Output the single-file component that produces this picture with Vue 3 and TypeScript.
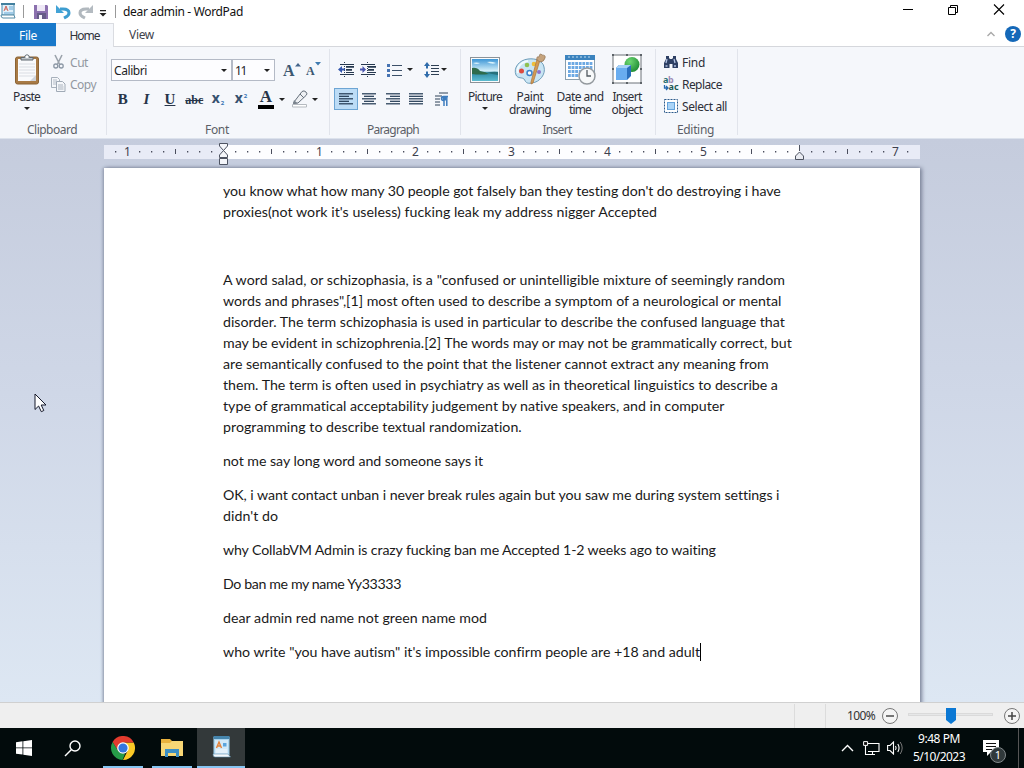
<script setup lang="ts">
import type { Directive } from 'vue'

interface Line { t: string; w: number }

// Spreads the letters of an element so its text takes the given width.
const vFit: Directive<HTMLElement, number> = {
  mounted(el, binding) {
    const range = document.createRange()
    range.selectNodeContents(el)
    const natural = range.getBoundingClientRect().width
    const count = (el.textContent ?? '').trim().length
    if (count > 0) el.style.letterSpacing = `${(binding.value - natural) / count}px`
  }
}

const paragraphs: Line[][] = [
  [
    { t: "you know what how many 30 people got falsely ban they testing don't do destroying i have", w: 558 },
    { t: "proxies(not work it's useless) fucking leak my address nigger Accepted", w: 434 }
  ],
  [{ t: '', w: 0 }],
  [
    { t: 'A word salad, or schizophasia, is a "confused or unintelligible mixture of seemingly random', w: 562 },
    { t: 'words and phrases",[1] most often used to describe a symptom of a neurological or mental', w: 558 },
    { t: 'disorder. The term schizophasia is used in particular to describe the confused language that', w: 562 },
    { t: 'may be evident in schizophrenia.[2] The words may or may not be grammatically correct, but', w: 569 },
    { t: 'are semantically confused to the point that the listener cannot extract any meaning from', w: 546 },
    { t: 'them. The term is often used in psychiatry as well as in theoretical linguistics to describe a', w: 555 },
    { t: 'type of grammatical acceptability judgement by native speakers, and in computer', w: 502 },
    { t: 'programming to describe textual randomization.', w: 299 }
  ],
  [{ t: 'not me say long word and someone says it', w: 260 }],
  [
    { t: 'OK, i want contact unban i never break rules again but you saw me during system settings i', w: 556 },
    { t: "didn't do", w: 55 }
  ],
  [{ t: 'why CollabVM Admin is crazy fucking ban me Accepted 1-2 weeks ago to waiting', w: 493 }],
  [{ t: 'Do ban me my name Yy33333', w: 178 }],
  [{ t: 'dear admin red name not green name mod', w: 264 }],
  [{ t: 'who write "you have autism" it\'s impossible confirm people are +18 and adult', w: 477 }]
]

// Ruler marks, every eighth of an inch, 96px to the inch.
const origin = 119.5
const marks = Array.from({ length: 67 }, (_, i) => i - 9)
  .filter(i => i !== 0 && i !== 48)
  .map(i => ({
    x: origin + i * 12,
    kind: i % 8 === 0 ? 'num' : i % 4 === 0 ? 'half' : 'dot',
    label: Math.abs(i / 8)
  }))

const aligns: number[][][] = [
  [[0, 14], [0, 10], [0, 14], [0, 10], [0, 14]],
  [[0, 14], [2, 12], [0, 14], [2, 12], [0, 14]],
  [[0, 14], [4, 14], [0, 14], [4, 14], [0, 14]],
  [[0, 14], [0, 14], [0, 14], [0, 14], [0, 14]]
]
</script>

<template>
  <div class="desktop">
    <header class="titlebar">
      <svg class="app-icon" width="16" height="18" viewBox="0 0 16 18">
        <path d="M2 2h12v11H2z" fill="#dff0fa" stroke="#4b8caf" />
        <path d="M1 2h14" stroke="#417f9e" stroke-width="2" />
        <path d="M4 9l2-5 2 5M5 7h2" stroke="#d0685b" fill="none" />
        <path d="M9 5h4M9 7h4M4 11h9" stroke="#62a6d5" />
        <path d="M1 13h13l1 3H3q-2 0-2-3z" fill="#fff" stroke="#548ba5" />
      </svg>
      <i class="sep s1"></i>
      <svg class="save" width="14" height="14" viewBox="0 0 14 14">
        <path d="M0 0h13l1 1v13H0z" fill="#8b70ae" />
        <path d="M3 0h8v6H3z" fill="#eee8f6" />
        <path d="M3 8h9v6H3z" fill="#665c88" />
        <path d="M5 10h3v4H5z" fill="#f7f5fb" />
      </svg>
      <svg class="undo" width="15" height="16" viewBox="0 0 15 16">
        <path d="M4 5h3c5 0 6 2 6 4 0 3-3 4-5 5" fill="none" stroke="#3d9dd0" stroke-width="3" />
        <path d="M0 1v8h8z" fill="#43a3d6" />
      </svg>
      <svg class="redo" width="15" height="16" viewBox="0 0 15 16">
        <path d="M11 5H8C3 5 2 7 2 9c0 3 3 4 5 5" fill="none" stroke="#b1b8be" stroke-width="3" />
        <path d="M15 1v8H7z" fill="#b4bbc1" />
      </svg>
      <svg class="qat" width="8" height="7" viewBox="0 0 8 7"><path d="M1 0h6v1.2H1zM0.5 3h7L4 6.5z" fill="#222" /></svg>
      <i class="sep s2"></i>
      <span class="title"><span v-fit="120">dear admin - WordPad</span></span>
      <svg class="winbtns" width="106" height="14" viewBox="0 0 106 14">
        <path d="M1 7.500h10" stroke="#000" />
        <path d="M46.500 5.500h7v7h-7zM48.500 5.500v-2h7v7h-2" fill="none" stroke="#000" />
        <path d="M92 2.500l10 10M102 2.500l-10 10" stroke="#000" stroke-width="1.100" />
      </svg>
    </header>

    <nav class="tabs">
      <div class="tab file"><span v-fit="18">File</span></div>
      <div class="tab home"><span v-fit="30">Home</span></div>
      <div class="tab view"><span v-fit="25">View</span></div>
      <svg class="collapse" width="8" height="6" viewBox="0 0 8 6"><path d="M.5 5L4 1.500 7.500 5" fill="none" stroke="#a9a9a9" stroke-width="1.400" /></svg>
      <div class="help">?</div>
    </nav>

    <section class="ribbon">
      <div class="group clipboard">
        <div class="body">
          <div class="big paste">
            <svg width="26" height="32" viewBox="0 0 26 32">
              <rect x="1.500" y="4" width="23" height="27" rx="2" fill="#a87a45" stroke="#8a6335" />
              <rect x="4" y="6" width="18" height="22" fill="#f9fafc" />
              <path d="M5 11h16M5 14h16M5 17h16M5 20h16M5 23h16" stroke="#dadde3" />
              <path d="M16 28h6v-6z" fill="#cfd3da" />
              <path d="M7 7V4.500h3.500c0-3.500 5-3.500 5 0H19V7z" fill="#bcc3c9" stroke="#5e676f" />
              <circle cx="13" cy="3.800" r="1.200" fill="#fff" />
            </svg>
            <span v-fit="27">Paste</span>
            <b class="arrow"></b>
          </div>
          <div class="small-list dim">
            <div class="item">
              <svg width="16" height="16" viewBox="0 0 16 16">
                <path d="M5 1l4.500 9M12 1L7.500 10" stroke="#9ba3ac" stroke-width="1.600" />
                <circle cx="5.800" cy="12" r="2" fill="none" stroke="#8c98a6" stroke-width="1.300" />
                <circle cx="11.200" cy="12" r="2" fill="none" stroke="#8c98a6" stroke-width="1.300" />
              </svg>
              <span v-fit="18">Cut</span>
            </div>
            <div class="item">
              <svg width="16" height="16" viewBox="0 0 16 16">
                <path d="M1.500 1.500h6l2 2v8h-8z" fill="#f5f7fa" stroke="#a7b0bb" />
                <path d="M3 4h4M3 6h4M3 8h3" stroke="#b4bcc7" />
                <path d="M6.500 5.500h6l2.500 2.500v7.500H6.500z" fill="#f5f7fa" stroke="#a0aab6" />
                <path d="M8 9h5M8 11h5.500M8 13h5.500" stroke="#aab3bf" />
              </svg>
              <span v-fit="26">Copy</span>
            </div>
          </div>
        </div>
        <div class="label"><span v-fit="50">Clipboard</span></div>
      </div>

      <div class="group font">
        <div class="body">
          <div class="row combos">
            <div class="combo name"><span v-fit="33">Calibri</span><b class="arrow"></b></div>
            <div class="combo size"><span v-fit="11">11</span><b class="arrow"></b></div>
            <div class="grow">A<svg width="6" height="4" viewBox="0 0 6 4"><path d="M0 3.500L3 0l3 3.500z" fill="#44658b" /></svg></div>
            <div class="grow shrink">A<svg width="6" height="4" viewBox="0 0 6 4"><path d="M0 0h6L3 3.500z" fill="#3e7ab0" /></svg></div>
          </div>
          <div class="row styles">
            <span class="st b">B</span>
            <span class="st it">I</span>
            <span class="st u">U</span>
            <span class="st abc">abc</span>
            <span class="st x">x<small class="lo">2</small></span>
            <span class="st x">x<small class="hi">2</small></span>
            <span class="st colour"><em>A</em><i></i></span>
            <b class="arrow"></b>
            <svg class="pen" width="18" height="18" viewBox="0 0 18 18">
              <path d="M3 12L11 1.500q2-1.500 4 .5t0 3.500L7 13l-4.500.5z" fill="#eef0f3" stroke="#66707c" />
              <path d="M9 4l4 4" stroke="#66707c" />
              <path d="M3 10l3.500 3.200-4.500.8z" fill="#7b848e" />
              <path d="M1.500 14.500h14v2.500h-14z" fill="#fff" stroke="#b5bac0" />
            </svg>
            <b class="arrow"></b>
          </div>
        </div>
        <div class="label"><span v-fit="24">Font</span></div>
      </div>

      <div class="group paragraph">
        <div class="body">
          <div class="row para-top">
            <svg width="16" height="16" viewBox="0 0 16 16">
              <path d="M2 2.500h14M8 4.500h8M8 7.500h6M8 10.500h8M2 12.500h14" stroke="#26384f" />
              <path d="M8 5h8M8 8h6" stroke="#26384f" stroke-width="1.500" />
              <path d="M6.500 0v16" stroke="#26384f" stroke-dasharray="1 1" />
              <path d="M0 7.500L4 4v2.500h3v2H4V11z" fill="#3557ae" />
            </svg>
            <svg width="16" height="16" viewBox="0 0 16 16">
              <path d="M1 2.500h14M8 4.500h8M8 7.500h6M8 10.500h8M1 12.500h14" stroke="#26384f" />
              <path d="M8 5h8M8 8h6" stroke="#26384f" stroke-width="1.500" />
              <path d="M7.500 0v16" stroke="#26384f" stroke-dasharray="1 1" />
              <path d="M6 7.500L2.500 4v2.500H0v2h2.500V11z" fill="#4a55ae" />
            </svg>
            <svg class="bullets" width="15" height="14" viewBox="0 0 15 14">
              <path d="M0 1h3v3H0zM0 6h3v3H0zM0 11h3v3H0z" fill="#4673b2" />
              <path d="M5 2.500h10M5 7.500h10M5 12.500h10" stroke="#3b5069" />
            </svg>
            <b class="arrow"></b>
            <svg class="spacing" width="16" height="16" viewBox="0 0 16 16">
              <path d="M3 0L0 4h2v2.500h2V4h2zM3 16L0 12h2V9.500h2V12h2z" fill="#2f6baa" />
              <path d="M7 3.500h8M7 6.500h8M7 9.500h8M7 12.500h8" stroke="#2f4054" />
            </svg>
            <b class="arrow"></b>
          </div>
          <div class="row para-bottom">
            <div v-for="(a, i) in aligns" :key="i" class="align" :class="{ on: i === 0 }">
              <svg width="14" height="12" viewBox="0 0 14 12">
                <path v-for="(l, k) in a" :key="k" :d="`M${l[0]} ${k * 2.5 + 0.8}H${l[1]}`" stroke="#1f3650" stroke-width="1.200" />
              </svg>
            </div>
            <svg class="pilcrow" width="14" height="14" viewBox="0 0 14 14">
              <path d="M4 1h9M0 4h7M0 7h5M0 10h5M0 13h5" stroke="#2c4057" />
              <path d="M13 4.500H8.500a2 2 0 0 0 0 4H9V14M11.800 5v9" fill="none" stroke="#3d7cbe" stroke-width="1.500" />
              <path d="M7 5h4v3.500H8z" fill="#3d7cbe" />
            </svg>
          </div>
        </div>
        <div class="label"><span v-fit="52">Paragraph</span></div>
      </div>

      <div class="group insert">
        <div class="body">
          <div class="big i1">
            <svg width="32" height="32" viewBox="0 0 32 32">
              <defs>
                <linearGradient id="sky" x1="0" y1="0" x2="0" y2="1"><stop offset="0" stop-color="#3d96d6" /><stop offset=".55" stop-color="#d6f1fa" /><stop offset=".62" stop-color="#2f8aa5" /><stop offset="1" stop-color="#5dbcd0" /></linearGradient>
              </defs>
              <rect x="1.500" y="4.500" width="29" height="25" fill="#fbfcfd" stroke="#8b9298" />
              <rect x="3" y="6" width="26" height="22" fill="url(#sky)" />
              <path d="M3 15q5-1 8 3 6 1 9 3-9 1-17 0z" fill="#2e6b4b" />
              <path d="M18 9q4-1 9 1-4 2-9-1zM4 10q3-1 7 0-3 2-7 0z" fill="#d9f2fc" />
              <path d="M18 20q6-2 11-1v3q-6-1-11-2z" fill="#27717c" />
            </svg>
            <span v-fit="34">Picture</span><b class="arrow"></b>
          </div>
          <div class="big i2">
            <svg width="32" height="32" viewBox="0 0 32 32">
              <path d="M14 6C5 7-1 15 2 22c2 4 6 2 8 4 2 3 2 5 8 4 8-1 14-9 12-16C29 8 22 5 14 6z" fill="#c9e5f4" stroke="#6e9db9" />
              <path d="M14 8C7 9 2 15 4 20" fill="none" stroke="#f1fafe" stroke-width="2" />
              <circle cx="13" cy="12" r="2.300" fill="#8fc150" /><circle cx="20" cy="11" r="2.300" fill="#eebf3a" />
              <circle cx="7.500" cy="18" r="2.500" fill="#dc4b40" /><circle cx="15.500" cy="20" r="2.500" fill="#fff" stroke="#3b83cd" stroke-width="1.500" />
              <circle cx="25" cy="19" r="2" fill="#8d73c8" />
              <path d="M26 7L19 30l-2 1 0-2 6-23z" fill="#d39b55" stroke="#ab733a" stroke-width=".7" />
              <path d="M23 7q-1-4 2-3 1-5 3-2 4 0 3 3-1 4-5 4z" fill="#c5a37d" stroke="#917351" stroke-width=".7" />
            </svg>
            <span v-fit="27">Paint</span><span v-fit="42">drawing</span>
          </div>
          <div class="big i3">
            <svg width="32" height="32" viewBox="0 0 32 32">
              <rect x="1.500" y="3.500" width="29" height="23" fill="#fff" stroke="#8a9fae" />
              <path d="M1 2h30v5H1z" fill="#3b83be" /><path d="M4 4h24" stroke="#bfdcf0" stroke-dasharray="2 2" />
              <g fill="#6da9e3"><path v-for="n in 28" :key="n" :d="`M${4 + ((n - 1) % 7) * 3.6} ${9 + Math.floor((n - 1) / 7) * 4}h2.800v3h-2.800z`" /></g>
              <circle cx="23" cy="23" r="8" fill="#f7f9fa" stroke="#93999e" stroke-width="1.500" />
              <path d="M23 17v6h4" fill="none" stroke="#535b62" stroke-width="1.300" />
            </svg>
            <span v-fit="47">Date and</span><span v-fit="22">time</span>
          </div>
          <div class="big i4">
            <svg width="32" height="32" viewBox="0 0 32 32">
              <defs>
                <radialGradient id="ball" cx=".35" cy=".3" r=".8"><stop offset="0" stop-color="#6ed873" /><stop offset="1" stop-color="#1a8730" /></radialGradient>
              </defs>
              <rect x="2" y="2" width="28" height="28" fill="#fff" stroke="#6d7378" />
              <path d="M1 1h2v2H1zM15 1h2v2h-2zM29 1h2v2h-2zM1 15h2v2H1zM29 15h2v2h-2zM1 29h2v2H1zM15 29h2v2h-2zM29 29h2v2h-2z" fill="#5d6368" />
              <circle cx="21" cy="11.500" r="7.500" fill="url(#ball)" />
              <path d="M5 15l3-3h12v11l-4 4H5z" fill="#2b70bd" /><path d="M5 15h11v12H5z" fill="#69adf0" /><path d="M5 15l3-3h12l-4 3z" fill="#a5d1f8" />
            </svg>
            <span v-fit="29">Insert</span><span v-fit="31">object</span>
          </div>
        </div>
        <div class="label"><span v-fit="29">Insert</span></div>
      </div>

      <div class="group editing">
        <div class="body">
          <div class="small-list">
            <div class="item">
              <svg width="16" height="16" viewBox="0 0 16 16">
                <path d="M3 2h3v2l1 1h2l1-1V2h3v3l2 4v5H9.500v-4h-3v4H1V9l2-4z" fill="#2d3f63" />
                <path d="M4 5l-1 4M11 5l1 4M2.500 12h2M11 12h2" stroke="#afbfdf" stroke-width="1.300" />
              </svg>
              <span v-fit="23">Find</span>
            </div>
            <div class="item">
              <svg class="rep" width="16" height="16" viewBox="0 0 16 16">
                <text x="0" y="7" class="ic" fill="#267070">a</text><text x="5" y="7" class="ic" fill="#9e8bb5">b</text>
                <text x="5.500" y="14" class="ic" fill="#1e5954">ac</text>
                <path d="M1.500 9v3h3M3 10l2 2-2 2" fill="none" stroke="#276ab0" stroke-width="1.300" />
              </svg>
              <span v-fit="40">Replace</span>
            </div>
            <div class="item">
              <svg width="16" height="16" viewBox="0 0 16 16">
                <rect x="1.500" y="1.500" width="13" height="13" fill="#fff" stroke="#2d5a8b" stroke-dasharray="2 1" />
                <rect x="4.500" y="4.500" width="7" height="7" fill="#a9d4f8" stroke="#63a2da" />
              </svg>
              <span v-fit="45">Select all</span>
            </div>
          </div>
        </div>
        <div class="label"><span v-fit="37">Editing</span></div>
      </div>
    </section>

    <main class="workspace">
      <svg class="ruler" width="816" height="24" viewBox="0 0 816 24">
        <rect y="2" width="816" height="14" fill="#e8ebf6" />
        <rect x="119.500" y="2" width="576" height="14" fill="#fdfdff" />
        <template v-for="m in marks" :key="m.x">
          <text v-if="m.kind === 'num'" :x="m.x" y="13" class="num">{{ m.label }}</text>
          <rect v-else-if="m.kind === 'half'" :x="m.x - 0.5" y="6" width="1" height="5" fill="#4a4d5c" />
          <rect v-else :x="m.x - 0.5" y="8" width="1.300" height="1.500" fill="#4a4d5c" />
        </template>
        <path d="M115.500.5h8v2.500l-4 4.500-4-4.500zM115.500 14.500V12l4-4.500 4 4.500v2.500zM115.500 15.500h8v6h-8z" fill="#f5f6fa" stroke="#4e5361" />
        <path d="M695.500 2v6M691.500 16.500V13l4-4 4 4v3.500z" fill="#e9ebf2" stroke="#4e5361" />
      </svg>
      <article class="page">
        <p v-for="(p, i) in paragraphs" :key="i">
          <span v-for="(l, k) in p" :key="k" class="line"><span v-fit="l.w">{{ l.t }}</span><i v-if="i === paragraphs.length - 1" class="caret"></i></span>
        </p>
      </article>
      <svg class="pointer" width="14" height="20" viewBox="0 0 14 20">
        <path d="M1 1v15.500l3.600-3.500 2.700 5.700 2.500-1.200-2.600-5.500h4.800z" fill="#fff" stroke="#14182a" />
      </svg>
    </main>

    <footer class="status">
      <i class="div d1"></i><i class="div d2"></i>
      <span class="pct"><span v-fit="28">100%</span></span>
      <svg class="zoombtn" width="18" height="18" viewBox="0 0 18 18"><circle cx="9" cy="9" r="7.500" fill="#f4f4f4" stroke="#777" /><path d="M5 9h8" stroke="#555" stroke-width="1.600" /></svg>
      <svg class="slider" width="86" height="18" viewBox="0 0 86 18">
        <rect x=".5" y="6.500" width="84" height="2" fill="#e6e7e8" stroke="#dadada" />
        <path d="M38 1h10v12l-5 4-5-4z" fill="#0b78d4" />
      </svg>
      <svg class="zoombtn last" width="18" height="18" viewBox="0 0 18 18"><circle cx="9" cy="9" r="7.500" fill="#f4f4f4" stroke="#777" /><path d="M5 9h8M9 5v8" stroke="#444" stroke-width="1.500" /></svg>
    </footer>

    <div class="taskbar">
      <div class="tb w48">
        <svg width="16" height="16" viewBox="0 0 16 16"><path d="M0 2.200l6.500-.9v6.200H0zM7.300 1.200L16 0v7.500H7.300zM0 8.300h6.500v6.300L0 13.700zM7.300 8.300H16V16l-8.700-1.200z" fill="#fff" /></svg>
      </div>
      <div class="tb w48">
        <svg width="17" height="17" viewBox="0 0 17 17"><circle cx="11" cy="6" r="5" fill="none" stroke="#fff" stroke-width="1.400" /><path d="M7.500 9.500L1 16" stroke="#fff" stroke-width="1.500" /></svg>
      </div>
      <div class="tb chrome">
        <svg width="24" height="24" viewBox="0 0 24 24">
          <path d="M12 6.500h10.700A12 12 0 0 1 12 24l4.800-9.500z" fill="#fbc926" />
          <path d="M1.600 6L7 15l5-3V6.500h10.700A12 12 0 0 0 1.600 6z" fill="#e33b2e" />
          <path d="M1.600 6L7.200 15q2 3 7 2.500L11.500 24A12 12 0 0 1 1.600 6z" fill="#269b48" />
          <circle cx="12" cy="12" r="5.800" fill="#fff" /><circle cx="12" cy="12" r="4.600" fill="#3477df" />
        </svg>
      </div>
      <div class="tb folder">
        <svg width="22" height="18" viewBox="0 0 22 18">
          <path d="M0 0h9l2 2h11v15H0z" fill="#e9b23d" /><path d="M0 4h9l2-2h11v15H0z" fill="#f8d775" />
          <path d="M4 18v-8h14v8h-3v-4H7v4z" fill="#3d8fc4" />
        </svg>
      </div>
      <div class="tb wordpad">
        <svg width="19" height="22" viewBox="0 0 19 22">
          <path d="M1.500 1h16v18h-16z" fill="#a9d4ee" /><path d="M1.500 0h16v3h-16z" fill="#4685ac" />
          <path d="M3 4h13v14H3z" fill="#d3e9f8" />
          <path d="M4.500 12l2.500-6 2.500 6M5.500 10h3.500" stroke="#e48239" stroke-width="1.400" fill="none" />
          <path d="M11 7h3.500v3.500H11z" fill="#5ba4dd" /><path d="M4 14h11M4 16h11" stroke="#f5fafd" />
          <path d="M1 18h15l2.500 3H3q-2 0-2-3z" fill="#f5f9fc" stroke="#5a8eae" stroke-width=".6" />
        </svg>
      </div>
      <div class="tray">
        <svg width="13" height="8" viewBox="0 0 13 8"><path d="M1 7l5.500-5.500L12 7" fill="none" stroke="#fff" stroke-width="1.400" /></svg>
        <svg class="net" width="17" height="15" viewBox="0 0 17 15">
          <path d="M5 2.500h11v8H5M2.500 4v9.500H12M9.500 11v2.500" fill="none" stroke="#fff" stroke-width="1.100" />
          <path d="M.6.6h4v3.800h-4z" fill="#111" stroke="#fff" />
        </svg>
        <svg class="vol" width="17" height="14" viewBox="0 0 17 14">
          <path d="M.6 4.500H3L6.500 1v12L3 9.500H.6z" fill="none" stroke="#fff" stroke-width="1.100" />
          <path d="M8.500 5q1.200 2 0 4M10.800 3q2.500 4 0 8" fill="none" stroke="#fff" stroke-width="1.100" />
          <path d="M13.200 1q4 6 0 12" fill="none" stroke="#777" />
        </svg>
        <div class="clock"><span v-fit="42">9:48 PM</span><span v-fit="52">5/10/2023</span></div>
        <div class="action">
          <svg width="17" height="17" viewBox="0 0 17 17"><path d="M0 0h16v12H8l-4 4v-4H0z" fill="#fff" /><path d="M3 3.500h10M3 6.500h10M3 9.500h6" stroke="#111" stroke-width="1.100" /></svg>
          <span class="badge">1</span>
        </div>
      </div>
      <i class="peek"></i>
    </div>
  </div>
</template>

<style>
html, body { margin: 0; overflow: hidden; }
</style>

<style scoped>
* { box-sizing: border-box; }
.desktop { width: 1024px; height: 768px; display: flex; flex-direction: column; font: 12px/14px "Noto Sans", "Open Sans", sans-serif; color: #2d2f38; overflow: hidden; white-space: nowrap; background: #fff; }
svg { display: block; flex: none; }
i { flex: none; }
.arrow { flex: none; display: block; width: 0; height: 0; border: 3px solid transparent; border-top-color: #222; border-bottom: 0; }

.titlebar { height: 23px; display: flex; align-items: center; flex: none; }
.app-icon { margin-top: -2px; }
.sep { width: 1px; height: 13px; background: #999; }
.s1 { margin-left: 7px; }
.save { margin-left: 10px; }
.undo { margin-left: 8px; }
.redo { margin-left: 7px; }
.qat { margin-left: 6px; margin-top: 3px; }
.s2 { margin-left: 8px; }
.title { margin-left: 7px; width: 130px; color: #111; margin-top: 1px; }
.winbtns { margin-left: 649px; margin-top: -5px; }

.tabs { height: 24px; display: flex; flex: none; border-bottom: 1px solid #d5d7dc; }
.tab { display: flex; align-items: center; justify-content: center; height: 24px; }
.file { width: 56px; height: 23px; padding-top: 2px; background: #1979ca; color: #fff; }
.home { width: 58px; background: #f5f7fb; border: 1px solid #dadce1; border-width: 1px 1px 0 0; color: #30323a; }
.view { width: 55px; color: #40434c; }
.collapse { margin: 8px 0 0 818px; }
.help { margin: 3px 0 0 10px; width: 16px; height: 16px; border-radius: 50%; background: #1468b8; color: #fff; font-weight: 700; font-size: 12px; line-height: 16px; text-align: center; flex: none; }

.ribbon { height: 92px; flex: none; display: flex; background: #f5f7fb; border-bottom: 1px solid #dce2ec; }
.group { display: flex; flex-direction: column; margin: 2px 0 3px; border-right: 1px solid #e1e4eb; }
.body { height: 74px; display: flex; flex: none; }
.label { text-align: center; color: #5c5f67; line-height: 14px; padding-right: 2px; }
.clipboard { width: 107px; }
.font { width: 223px; }
.font .body, .paragraph .body { flex-direction: column; }
.paragraph { width: 131px; }
.paragraph .label { padding-right: 4px; }
.insert { width: 195px; }
.editing { width: 82px; }
.big { display: flex; flex-direction: column; align-items: center; line-height: 13px; padding-top: 4px; }
.big span { display: block; }
.big .arrow { margin-top: 4px; }
.big svg { margin-bottom: 5px; }
.paste { width: 53px; }
.small-list { padding-top: 2px; }
.item { display: flex; align-items: center; height: 22px; gap: 3px; }
.item span { padding-top: 1px; }
.dim { color: #9298a1; margin-left: -3px; }
.dim .item { gap: 4px; }

.row { display: flex; align-items: center; flex: none; }
.combos { margin: 10px 0 0 4px; height: 22px; }
.combo { height: 22px; border: 1px solid #b4bac6; background: #fdfdff; display: flex; align-items: center; justify-content: space-between; padding: 1px 4px 0 2px; color: #1d1f27; }
.name { width: 121px; }
.size { width: 43px; margin-left: 0; }
.combo .arrow { margin-top: -1px; }
.grow { display: flex; font: bold 16px/18px "Liberation Serif", serif; color: #3c5871; margin-left: 8px; width: 22px; padding-top: 2px; }
.shrink { font-size: 12px; line-height: 20px; margin-left: 1px; }
.grow svg { margin-top: 1px; }
.styles { margin: 8px 0 0 4px; height: 20px; color: #273549; font-family: "Liberation Serif", serif; font-weight: 700; font-size: 15px; }
.st { width: 23.600px; text-align: center; flex: none; line-height: 18px; }
.it { font-style: italic; }
.u { text-decoration: underline; }
.abc { font-size: 12px; text-decoration: line-through; width: 25px; padding-top: 2px; }
.x { font: bold 14px/16px "Noto Sans", sans-serif; color: #36516f; position: relative; width: 23px; padding-right: 5px; margin-top: -3px; }
.x small { position: absolute; font-size: 6px; line-height: 8px; left: 14px; color: #3774b3; }
.lo { top: 9px; }
.hi { top: 2px; }
.colour { display: flex; flex-direction: column; align-items: center; width: 20px; margin-left: 3px; }
.colour em { font-style: normal; font-size: 17px; line-height: 14px; }
.colour i { width: 16px; height: 4px; background: #000; margin-top: 1px; }
.colour + .arrow { margin-left: 3px; }
.pen { margin: 0 3px 0 6px; }

.para-top { margin: 12px 0 0 8px; height: 17px; }
.para-top svg + svg { margin-left: 6px; }
.para-top .bullets { margin-left: 11px !important; margin-right: 5px; }
.para-top .spacing { margin-left: 11px; margin-right: 1px; }
.para-bottom { margin: 9px 0 0 4px; height: 23px; }
.align { width: 23.500px; height: 22px; display: flex; align-items: center; justify-content: center; flex: none; border: 1px solid transparent; }
.on { background: #bcdcf6; border-color: #6da5d4; }
.pilcrow { margin-left: 7px; }

.i1 { width: 50px; margin-left: -1px; }
.i2 { width: 40px; }
.i3 { width: 60px; }
.i4 { width: 34px; }
.editing .small-list { margin-left: 7px; }
.rep { overflow: visible; }
.ic { font: bold 9px "Noto Sans", sans-serif; }

.workspace { height: 563px; flex: none; position: relative; overflow: hidden; display: flex; flex-direction: column; background: linear-gradient(#c5ccdd, #cfd7e7 45%, #dde7f3); padding: 4px 0 0 104px; }
.ruler { width: 816px; }
.num { font: 12px "Noto Sans", sans-serif; fill: #3d404d; text-anchor: middle; }
.page { width: 816px; height: 540px; margin-top: 1px; padding: 12px 0 0 119px; background: #fff; box-shadow: 2px 0 4px #7c8499, -1px 0 3px #8e97ab; flex: none; font: 14.200px/21px Lato, sans-serif; color: #1a1a1a; }
.page p { margin: 0 0 13px; }
.line { display: flex; align-items: center; height: 21px; }
.caret { width: 1px; height: 18px; background: #000; }
.pointer { position: absolute; left: 34px; top: 254px; }

.status { height: 26px; flex: none; border-top: 1px solid #d0d0d0; background: #efefef; display: flex; align-items: center; color: #333; }
.div { width: 1px; height: 24px; background: #dcdcdc; }
.d1 { margin-left: 794px; }
.d2 { margin-left: 30px; }
.pct { margin-left: 21px; width: 34px; }
.slider { margin-left: 9px; margin-right: 9px; }

.taskbar { height: 40px; flex: none; background: #020b0c; display: flex; color: #fff; }
.tb { display: flex; align-items: center; justify-content: center; flex: none; }
.w48 { width: 48px; }
.chrome, .folder { width: 40px; border-bottom: 2px solid #86c5f2; }
.chrome { margin-left: 7px; padding-top: 2px; }
.folder { margin-left: 9px; padding-top: 2px; }
.wordpad { width: 48px; margin-left: 5px; background: #33393a; border-bottom: 2px solid #86c5f2; }
.tray { display: flex; align-items: center; margin-left: 596px; width: 174px; flex: none; }
.net { margin-left: 9px; }
.vol { margin-left: 7px; }
.clock { margin-left: 9px; width: 52px; display: flex; flex-direction: column; align-items: center; line-height: 18px; flex: none; }
.action { position: relative; margin-left: 18px; }
.badge { position: absolute; left: 7px; top: 7px; width: 16px; height: 16px; border-radius: 50%; background: #30393b; border: 1px solid #81888a; text-align: center; font-size: 11px; line-height: 14px; }
.peek { width: 1px; background: #555; margin-left: 3px; }
</style>
